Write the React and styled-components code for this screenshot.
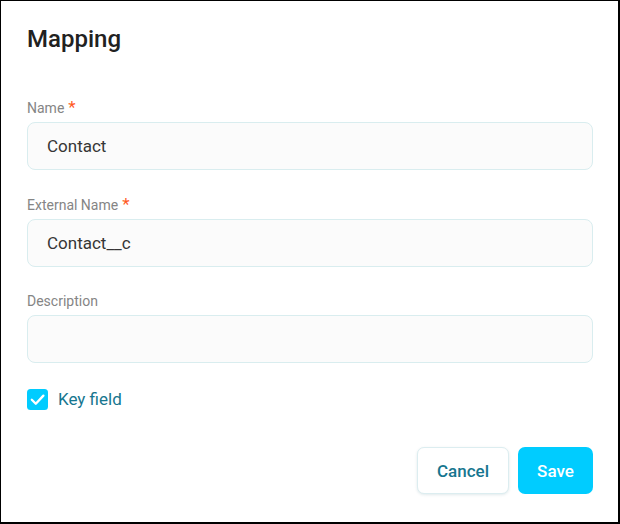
import React from 'react';
import styled, { createGlobalStyle } from 'styled-components';

const GlobalStyle = createGlobalStyle`
  html, body {
    margin: 0;
    padding: 0;
    background: #ffffff;
  }
  * {
    box-sizing: border-box;
  }
`;

const fields = [
  { label: 'Name', value: 'Contact', required: true },
  { label: 'External Name', value: 'Contact__c', required: true },
  { label: 'Description', value: '', required: false },
];

export default function App() {
  return (
    <>
      <GlobalStyle />
      <Frame>
        <Title>Mapping</Title>
        <Form>
          {fields.map((f) => (
            <Field key={f.label}>
              <Label>
                {f.label}
                {f.required && <Asterisk>*</Asterisk>}
              </Label>
              <Input defaultValue={f.value} />
            </Field>
          ))}
        </Form>
        <CheckRow>
          <CheckBox viewBox="0 0 21 21">
            <rect x="0" y="0" width="21" height="21" rx="3.5" fill="#00ccff" />
            <polyline
              points="4.8,10.8 8.8,14.8 16.4,6.6"
              fill="none"
              stroke="#ffffff"
              strokeWidth="2.3"
              strokeLinecap="round"
              strokeLinejoin="round"
            />
          </CheckBox>
          <CheckLabel>Key field</CheckLabel>
        </CheckRow>
        <Footer>
          <CancelButton>Cancel</CancelButton>
          <SaveButton>Save</SaveButton>
        </Footer>
      </Frame>
    </>
  );
}

const Frame = styled.div`
  width: 620px;
  height: 524px;
  border-style: solid;
  border-color: #000000;
  border-width: 1px 2px 2px 1px;
  background: #ffffff;
  padding: 24px 25px 0 26px;
  font-family: Roboto, 'Liberation Sans', sans-serif;
  display: flex;
  flex-direction: column;
`;

const Title = styled.h1`
  margin: 0;
  font-size: 24px;
  line-height: 28px;
  font-weight: 500;
  color: #212121;
`;

const Form = styled.div`
  margin-top: 47px;
  display: flex;
  flex-direction: column;
  gap: 26.5px;
`;

const Field = styled.div`
  display: flex;
  flex-direction: column;
  gap: 6px;
`;

const Label = styled.label`
  display: flex;
  align-items: flex-start;
  font-size: 14px;
  line-height: 16px;
  height: 16px;
  color: #858585;
`;

const Asterisk = styled.span`
  margin-left: 4px;
  margin-top: -1px;
  font-size: 17px;
  line-height: 17px;
  color: #ff5a1f;
`;

const Input = styled.input`
  height: 48px;
  width: 100%;
  border: 1px solid #d9edef;
  border-radius: 8px;
  background: #fbfbfb;
  padding: 0 19px;
  font-family: Roboto, 'Liberation Sans', sans-serif;
  font-size: 17px;
  color: #363636;
  outline: none;
`;

const CheckRow = styled.div`
  margin-top: 25px;
  display: flex;
  align-items: center;
  gap: 10px;
  height: 22px;
`;

const CheckBox = styled.svg`
  width: 21px;
  height: 21px;
  flex-shrink: 0;
`;

const CheckLabel = styled.span`
  font-size: 17px;
  color: #16768f;
`;

const Footer = styled.div`
  margin-top: 37px;
  display: flex;
  justify-content: flex-end;
  gap: 9px;
`;

const CancelButton = styled.button`
  height: 47px;
  width: 92px;
  border: 1px solid #dcedf0;
  border-radius: 7px;
  background: #ffffff;
  box-shadow: 0 1px 3px rgba(0, 80, 100, 0.12);
  font-family: Roboto, 'Liberation Sans', sans-serif;
  font-size: 17px;
  font-weight: 500;
  color: #16768f;
`;

const SaveButton = styled.button`
  height: 47px;
  width: 75px;
  border: none;
  border-radius: 7px;
  background: #00ccff;
  font-family: Roboto, 'Liberation Sans', sans-serif;
  font-size: 17px;
  font-weight: 500;
  color: #ffffff;
`;
